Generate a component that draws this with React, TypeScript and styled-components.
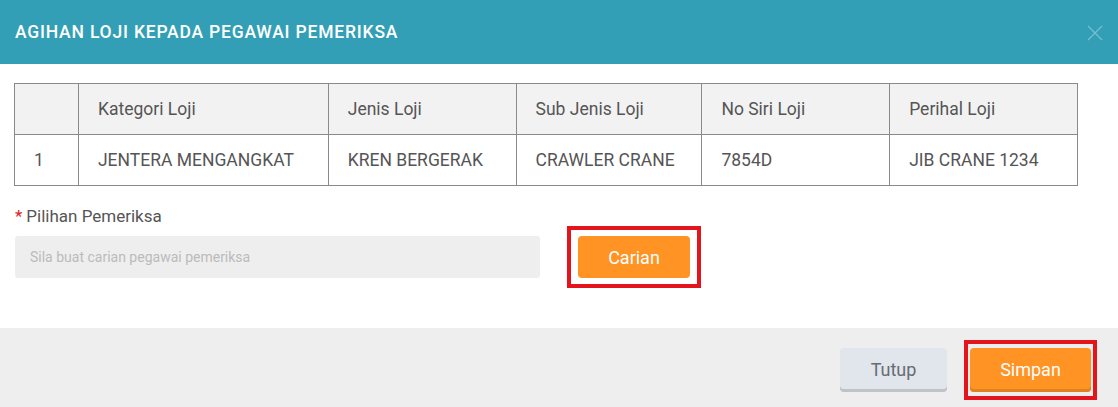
import styled, { createGlobalStyle } from 'styled-components';

const GlobalStyle = createGlobalStyle`
  html, body {
    margin: 0;
    padding: 0;
    background: #ffffff;
    font-family: Roboto, "Open Sans", Arial, sans-serif;
  }
  * {
    box-sizing: border-box;
  }
`;

const Modal = styled.div`
  width: 1118px;
  height: 407px;
  display: flex;
  flex-direction: column;
  background: #ffffff;
  overflow: hidden;
`;

const Header = styled.div`
  height: 64px;
  flex-shrink: 0;
  display: flex;
  align-items: center;
  justify-content: space-between;
  padding: 0 14px 0 15px;
  background: #329fb6;
`;

const Title = styled.h4`
  margin: 0;
  color: #ffffff;
  font-size: 17.5px;
  font-weight: 500;
  letter-spacing: 0.8px;
`;

const CloseBtn = styled.button`
  width: 18px;
  height: 18px;
  padding: 0;
  margin-top: 2px;
  border: none;
  background: transparent;
  display: flex;
  align-items: center;
  justify-content: center;
  cursor: pointer;
`;

const Body = styled.div`
  flex: 1;
  padding: 19px 40px 0 14px;
`;

const Table = styled.table`
  width: 1064px;
  border-collapse: collapse;
  color: #555555;
  font-size: 17.5px;
`;

const Th = styled.th<{ $w: number }>`
  width: ${({ $w }) => $w}px;
  height: 51px;
  padding: 0 19px;
  text-align: left;
  font-weight: 400;
  background: #f2f2f2;
  border: 1px solid #8a8a8a;
`;

const Td = styled.td`
  height: 51px;
  padding: 0 19px;
  border: 1px solid #8a8a8a;
`;

const Label = styled.div`
  margin-top: 20px;
  padding-left: 1px;
  font-size: 17px;
  color: #555555;
`;

const Star = styled.span`
  color: #e02020;
  margin-right: 4px;
`;

const SearchRow = styled.div`
  margin-top: 0;
  display: flex;
  align-items: center;
  gap: 27px;
  padding-left: 1px;
`;

const Input = styled.input`
  width: 525px;
  height: 42px;
  border: none;
  border-radius: 3px;
  background: #eeeeee;
  padding: 0 15px;
  font-family: inherit;
  font-size: 14px;
  color: #555555;

  &::placeholder {
    color: #bbbbbb;
  }
`;

const Highlight = styled.div<{ $pad: string }>`
  border: 4px solid #e3141b;
  padding: ${({ $pad }) => $pad};
  display: flex;
`;

const Button = styled.button<{ $variant: 'primary' | 'default'; $w: number; $h: number; $flat?: boolean }>`
  width: ${({ $w }) => $w}px;
  height: ${({ $h }) => $h}px;
  border: none;
  border-radius: 4px;
  font-family: inherit;
  font-size: 18px;
  cursor: pointer;
  background: ${({ $variant }) => ($variant === 'primary' ? '#ff9323' : '#e1e5ec')};
  color: ${({ $variant }) => ($variant === 'primary' ? '#ffffff' : '#666c73')};
  box-shadow: ${({ $variant, $flat }) =>
    $flat ? 'none' : `inset 0 -3px 0 ${$variant === 'primary' ? '#e0821d' : '#bfc3c8'}`};
`;

const Footer = styled.div`
  height: 79px;
  flex-shrink: 0;
  background: #eeeeee;
  display: flex;
  align-items: center;
  justify-content: flex-end;
  gap: 17px;
  padding: 4px 21px 0 0;
`;

const columns = [
  { label: '', w: 64 },
  { label: 'Kategori Loji', w: 250 },
  { label: 'Jenis Loji', w: 188 },
  { label: 'Sub Jenis Loji', w: 186 },
  { label: 'No Siri Loji', w: 188 },
  { label: 'Perihal Loji', w: 188 },
];

const rows = [['1', 'JENTERA MENGANGKAT', 'KREN BERGERAK', 'CRAWLER CRANE', '7854D', 'JIB CRANE 1234']];

export default function App() {
  return (
    <>
      <GlobalStyle />
      <Modal>
        <Header>
          <Title>AGIHAN LOJI KEPADA PEGAWAI PEMERIKSA</Title>
          <CloseBtn aria-label='Close'>
            <svg width='16' height='16' viewBox='0 0 16 16'>
              <path d='M1 1L15 15M15 1L1 15' stroke='#78bfcf' strokeWidth='1.2' fill='none' />
            </svg>
          </CloseBtn>
        </Header>
        <Body>
          <Table>
            <thead>
              <tr>
                {columns.map((c, i) => (
                  <Th key={i} $w={c.w}>
                    {c.label}
                  </Th>
                ))}
              </tr>
            </thead>
            <tbody>
              {rows.map((r, i) => (
                <tr key={i}>
                  {r.map((cell, j) => (
                    <Td key={j}>{cell}</Td>
                  ))}
                </tr>
              ))}
            </tbody>
          </Table>
          <Label>
            <Star>*</Star>Pilihan Pemeriksa
          </Label>
          <SearchRow>
            <Input placeholder='Sila buat carian pegawai pemeriksa' readOnly />
            <Highlight $pad='6px 7px'>
              <Button $variant='primary' $w={112} $h={42} $flat>
                Carian
              </Button>
            </Highlight>
          </SearchRow>
        </Body>
        <Footer>
          <Button $variant='default' $w={107} $h={44}>
            Tutup
          </Button>
          <Highlight $pad='4px 2px'>
            <Button $variant='primary' $w={121} $h={44}>
              Simpan
            </Button>
          </Highlight>
        </Footer>
      </Modal>
    </>
  );
}
